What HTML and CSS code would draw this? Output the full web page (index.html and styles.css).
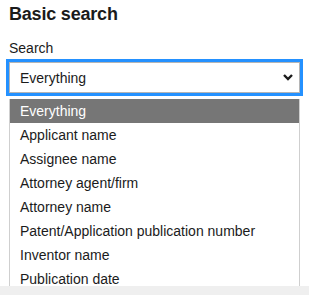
FILE: index.html
```html
<!DOCTYPE html>
<html lang="en">
<head>
    <meta charset="UTF-8">
    <meta name="viewport" content="width=device-width, initial-scale=1.0">
    <title>Basic search</title>
    <link rel="stylesheet" href="styles.css">
</head>
<body>
    <div class="page">
        <h1 class="title">Basic search</h1>
        <label class="field-label" for="search-select">Search</label>
        <div class="select-wrap">
            <div class="select" id="search-select">
                <span>Everything</span>
                <svg class="chevron" width="10" height="7" viewBox="0 0 10 7">
                    <polyline points="1,1 5,5 9,1" fill="none" stroke="#1b1b1b" stroke-width="2.4"/>
                </svg>
            </div>
            <ul class="menu">
                <li class="active">Everything</li>
                <li>Applicant name</li>
                <li>Assignee name</li>
                <li>Attorney agent/firm</li>
                <li>Attorney name</li>
                <li>Patent/Application publication number</li>
                <li>Inventor name</li>
                <li>Publication date</li>
            </ul>
        </div>
    </div>
</body>
</html>
```

FILE: styles.css
```css
body {
    margin: 0;
    font-family: "Liberation Sans", Arial, sans-serif;
    color: #1b1b1b;
    background-color: #efefef;
}
.page {
    height: 286px;
    padding: 2px 9px 0;
    box-sizing: border-box;
    background-color: #fff;
}
.title {
    margin: 0 0 12px;
    font-size: 18px;
    line-height: 24px;
    font-weight: bold;
    letter-spacing: -0.2px;
}
.field-label {
    display: block;
    font-size: 14px;
    line-height: 20px;
    margin-bottom: 4px;
}
.select-wrap {
    position: relative;
}
.select {
    display: flex;
    align-items: center;
    justify-content: space-between;
    height: 31px;
    padding: 0 5px 0 10px;
    box-sizing: border-box;
    border: 1px solid #b5b5b5;
    outline: 3px solid #2491ff;
    font-size: 14px;
    background-color: #fff;
}
.chevron {
    margin-right: 1px;
}
.menu {
    position: absolute;
    top: 37px;
    left: 0;
    right: 0;
    margin: 0;
    padding: 0;
    list-style: none;
    background-color: #fff;
    border: 1px solid #cfcfcf;
    border-top: none;
}
.menu li {
    height: 24px;
    line-height: 24px;
    padding-left: 10px;
    font-size: 14px;
}
.menu li.active {
    background-color: #767676;
    color: #fff;
}
```
